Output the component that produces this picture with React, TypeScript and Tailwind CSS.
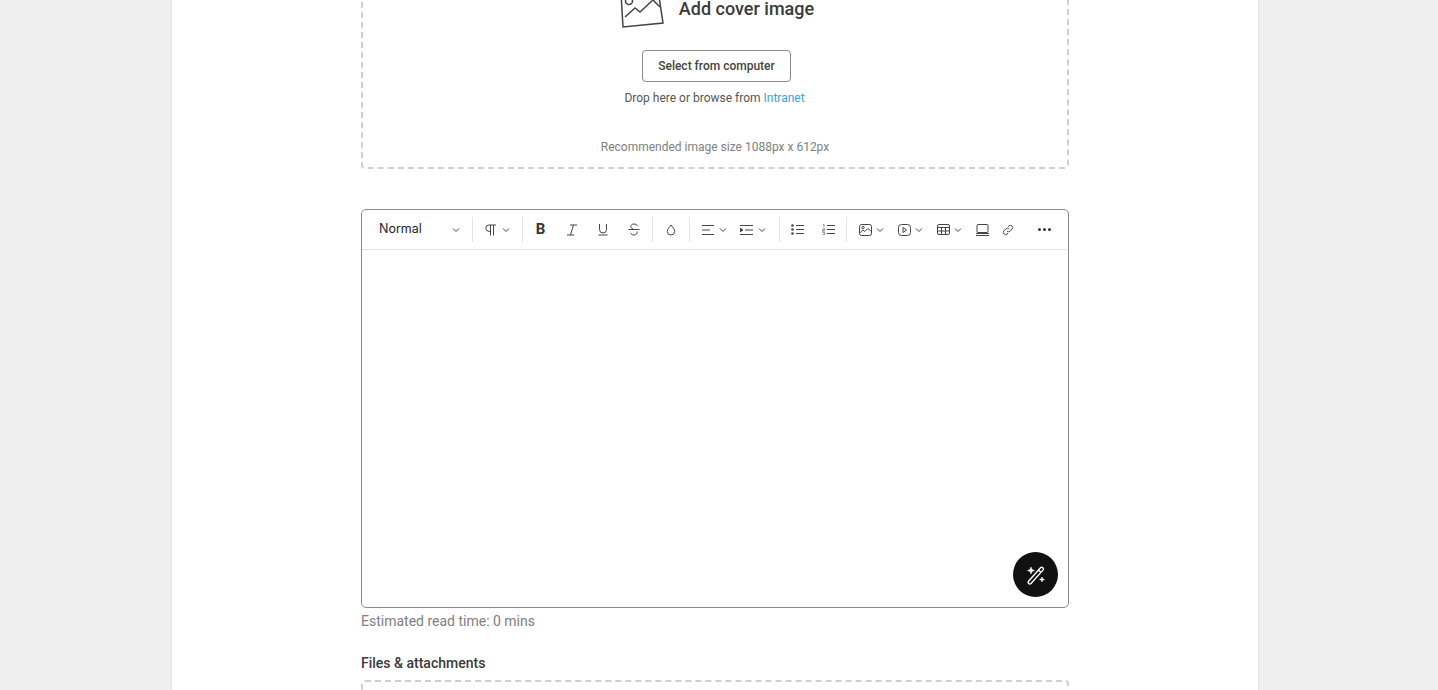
import React from 'react';

const Chevron = () => (
  <svg width="8" height="6" viewBox="0 0 8 6" fill="none" stroke="#444" strokeWidth="1">
    <path d="M1 1.5l3 3 3-3" />
  </svg>
);

const Icon: React.FC<{ w?: number; h?: number; children: React.ReactNode }> = ({ w = 14, h = 14, children }) => (
  <svg width={w} height={h} viewBox={`0 0 ${w} ${h}`} fill="none" stroke="#444" strokeWidth="1">
    {children}
  </svg>
);

const Sep = () => <div className="w-px h-[25px] bg-[#e4e4e4] shrink-0" />;

const Toolbar: React.FC = () => (
  <div className="h-[40px] flex items-center border-b border-[#e5e5e5] shrink-0">
    <div className="w-[110px] shrink-0 flex items-center justify-between pl-[17px] pr-[12px]">
      <span className="text-[12.5px] text-[#222] font-['Inter',sans-serif]">Normal</span>
      <Chevron />
    </div>
    <Sep />
    <div className="w-[49px] shrink-0 flex items-center justify-center gap-[5px] pr-[1px]">
      <Icon w={13} h={12}>
        <path d="M12 1H5a3.200 3.200 0 0 0 0 6.400h1.500M6.500 1v10.500M9.500 1v10.500" />
      </Icon>
      <Chevron />
    </div>
    <Sep />
    <div className="w-[129px] shrink-0 flex items-center pl-[2px]">
      <div className="w-[31px] flex justify-center">
        <span className="text-[15px] leading-none font-bold text-[#333] font-['Roboto',sans-serif]">B</span>
      </div>
      <div className="w-[31px] flex justify-center">
        <Icon w={12} h={12}>
          <path d="M4 1h7M1 11h7M7.500 1l-3 10" />
        </Icon>
      </div>
      <div className="w-[31px] flex justify-center">
        <Icon w={12} h={13}>
          <path d="M2.500 1v5.500a3.500 3.500 0 0 0 7 0V1M1.500 12h9" />
        </Icon>
      </div>
      <div className="w-[31px] flex justify-center">
        <Icon w={12} h={13}>
          <path d="M9.500 3C9 1.800 7.600 1 6 1 4 1 2.800 2 2.800 3.400c0 1 .6 1.800 2 2.200M.5 6.500h11M9.200 8.500c.2 2-1.200 3.500-3.200 3.500-1.700 0-3-.8-3.500-2.200" />
        </Icon>
      </div>
    </div>
    <Sep />
    <div className="w-[36px] shrink-0 flex justify-center">
      <Icon w={10} h={12}>
        <path d="M5 1c1.500 2.200 3.700 4 3.700 6.400A3.700 3.700 0 0 1 5 11a3.700 3.700 0 0 1-3.700-3.600C1.300 5 3.500 3.200 5 1z" />
      </Icon>
    </div>
    <Sep />
    <div className="w-[89px] shrink-0 flex items-center pl-[12px]">
      <Icon w={12} h={10}>
        <path d="M0 .5h12M0 5h8M0 9.500h12" />
      </Icon>
      <span className="ml-[5px] mr-[13px] flex"><Chevron /></span>
      <Icon w={13} h={10}>
        <path d="M0 .5h13M5 5h8M0 9.500h13" />
        <path d="M0 3l3 2-3 2z" fill="#444" />
      </Icon>
      <span className="ml-[5px] flex"><Chevron /></span>
    </div>
    <Sep />
    <div className="w-[66px] shrink-0 flex items-center pl-[11px] gap-[18px]">
      <Icon w={13} h={11}>
        <path d="M5 1.500h8M5 5.500h8M5 9.500h8" />
        <circle cx="1.500" cy="1.500" r="1.300" fill="#444" stroke="none" />
        <circle cx="1.500" cy="5.500" r="1.300" fill="#444" stroke="none" />
        <circle cx="1.500" cy="9.500" r="1.300" fill="#444" stroke="none" />
      </Icon>
      <Icon w={13} h={11}>
        <path d="M5 1.500h8M5 5.500h8M5 9.500h8" />
        <path d="M1 .5l1-.2v3M.5 4.800h2.200v1.200H.5v1.200h2.200M.5 8.500h2.200v2H.5" strokeWidth="0.6" />
      </Icon>
    </div>
    <Sep />
    <div className="flex-1 flex items-center pl-[12px]">
      <Icon w={13} h={12}>
        <rect x=".5" y=".5" width="12" height="11" rx="2" />
        <circle cx="4" cy="3.500" r="1.200" />
        <path d="M.8 9l3-3 2 1.500 3-3 3 2.500" />
      </Icon>
      <span className="ml-[4px] mr-[14px] flex"><Chevron /></span>
      <Icon w={13} h={12}>
        <rect x=".5" y=".5" width="12" height="11" rx="3" />
        <path d="M5 3.500v5l3.500-2.500z" />
      </Icon>
      <span className="ml-[4px] mr-[14px] flex"><Chevron /></span>
      <Icon w={13} h={11}>
        <rect x=".5" y=".5" width="12" height="10" rx="1.500" />
        <path d="M.5 3.500h12M.5 7h12M4.500 3.500v7M8.500 3.500v7" />
      </Icon>
      <span className="ml-[4px] mr-[14px] flex"><Chevron /></span>
      <Icon w={13} h={12}>
        <rect x="1" y=".5" width="11" height="8" rx="1" />
        <path d="M0 9.500h13M0 11.500h13" />
      </Icon>
      <span className="ml-[13px] flex">
        <Icon w={12} h={12}>
          <path d="M5 7a2.200 2.200 0 0 0 3.200 0l2-2a2.300 2.300 0 0 0-3.200-3.200L6 2.700" />
          <path d="M7 5a2.200 2.200 0 0 0-3.200 0l-2 2A2.300 2.300 0 0 0 5 10.200l1-.9" />
        </Icon>
      </span>
      <span className="ml-[24px] flex gap-[2px]">
        <span className="w-[3px] h-[3px] rounded-full bg-[#333]" />
        <span className="w-[3px] h-[3px] rounded-full bg-[#333]" />
        <span className="w-[3px] h-[3px] rounded-full bg-[#333]" />
      </span>
    </div>
  </div>
);

export default function App() {
  return (
    <div className="h-[690px] overflow-hidden bg-[#efefef] font-['Roboto',sans-serif]">
      <div className="mx-[171px] w-[1088px] h-full bg-white border-x border-[#e5e5e5] pl-[189px]">
        <div className="w-[708px] flex flex-col">
          <div className="-mt-[32px] h-[201px] shrink-0 border-2 border-dashed border-[#cfcfcf] rounded-[4px] flex flex-col items-center pt-[6px]">
            <div className="flex items-center gap-[14px] h-[64px] pl-[3px]">
              <svg width="46" height="46" viewBox="0 0 46 46" fill="none" stroke="#444" strokeWidth="1.500" className="shrink-0">
                <path d="M2 8l37-3 5 33-40 4z" />
                <circle cx="10" cy="16" r="3.500" />
                <path d="M6 32l10-9 5 4 13-12 7 7" />
              </svg>
              <span className="text-[18px] font-medium text-[#3a3a3a]">Add cover image</span>
            </div>
            <button className="mt-[10px] w-[149px] h-[32px] border border-[#8a8a8a] rounded-[4px] text-[12px] font-medium text-[#444] bg-white ml-[3px]">
              Select from computer
            </button>
            <p className="mt-[8px] text-[12px] leading-[16px] text-[#555] -ml-[1px]">
              Drop here or browse from <span className="text-[#3ba3dd]">Intranet</span>
            </p>
            <p className="mt-[33px] text-[12px] leading-[16px] text-[#808080]">Recommended image size 1088px x 612px</p>
          </div>

          <div className="mt-[40px] h-[399px] shrink-0 border border-[#8a8a8a] rounded-[5px] flex flex-col relative">
            <Toolbar />
            <div className="flex-1" />
            <button className="absolute right-[10px] bottom-[10px] w-[45px] h-[45px] rounded-full bg-[#111] flex items-center justify-center">
              <svg width="22" height="22" viewBox="0 0 22 22" fill="none" stroke="#fff" strokeWidth="1.400">
                <path d="M3.500 17.200L15.500 3.800a1.700 1.700 0 0 1 2.500 2.300L6 19.500a1.700 1.700 0 0 1-2.500-2.300zM13.500 6l2.600 2.400" />
                <path d="M6 3l1 2.500L9.500 6.500 7 7.500 6 10 5 7.500 2.500 6.500 5 5.500z" fill="#fff" strokeWidth="0.500" />
                <path d="M17 13l.7 1.800 1.800.7-1.800.7-.7 1.800-.7-1.800-1.800-.7 1.800-.7z" fill="#fff" strokeWidth="0.500" />
              </svg>
            </button>
          </div>

          <p className="mt-[4px] text-[14px] leading-[18px] text-[#808080]">Estimated read time: 0 mins</p>
          <p className="mt-[24px] text-[14px] leading-[18px] font-medium text-[#3a3a3a]">Files &amp; attachments</p>
          <div className="mt-[8px] h-[60px] shrink-0 border-2 border-dashed border-[#cfcfcf] rounded-[4px]" />
        </div>
      </div>
    </div>
  );
}
